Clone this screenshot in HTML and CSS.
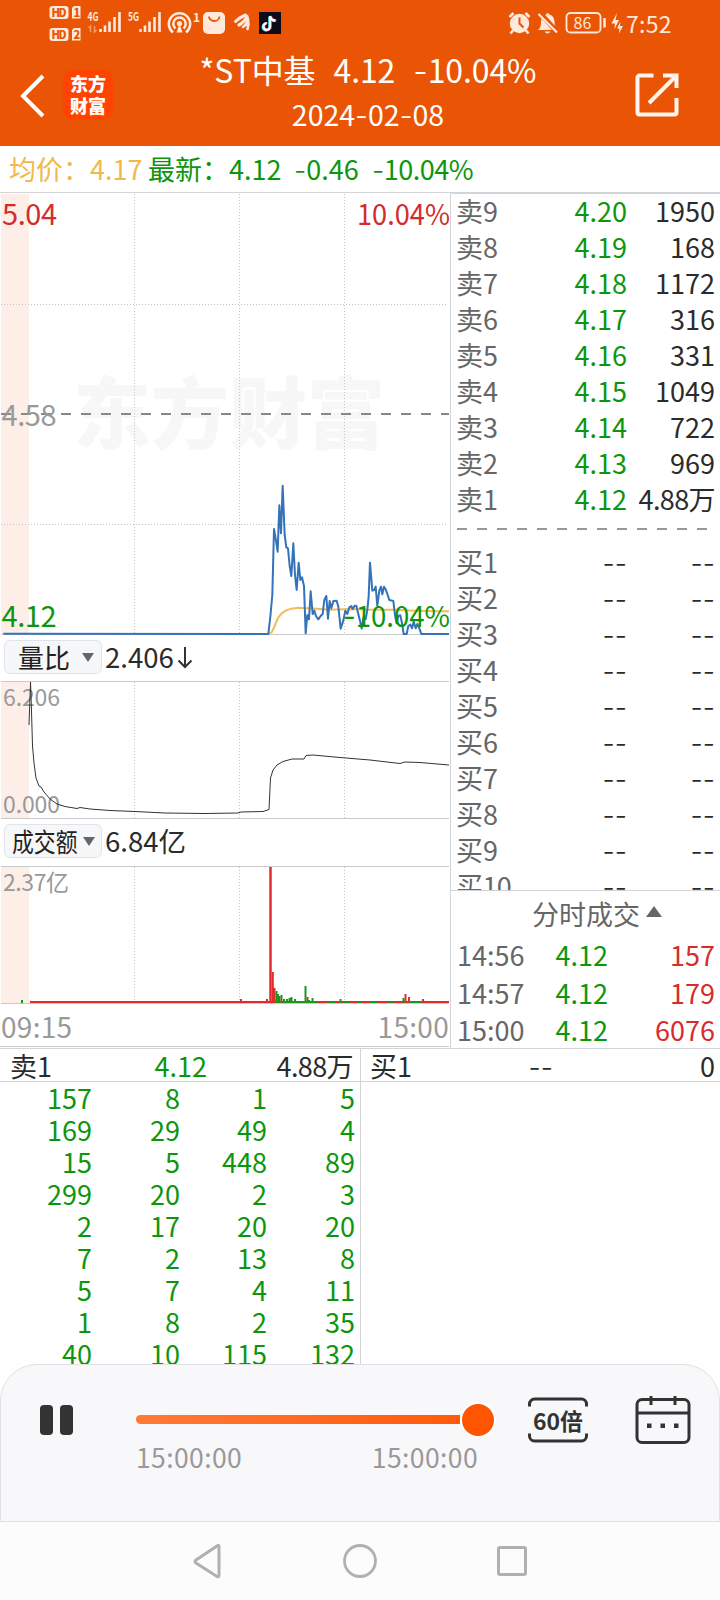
FILE: index.html
```html
<!DOCTYPE html>
<html lang="zh-CN">
<head>
  <meta charset="UTF-8" />
  <meta name="viewport" content="width=device-width, initial-scale=1.0"/>
  <title>*ST中基 2024-02-08</title>
  <link rel="stylesheet" href="styles.css">
</head>
<body>

  <!-- Header Section -->
  <header>
    <div class="status-bar">
      <svg width="36" height="46" viewBox="48 0 36 46">
        <g fill="#ffe9dc">
          <rect x="49.500" y="6" width="19" height="13" rx="3"/>
          <path d="M74 6h6.500v12.500h-8.500v-10.500z"/>
          <rect x="49.500" y="28" width="19" height="13" rx="3"/>
          <path d="M74 28h6.500v12.500h-8.500v-10.500z"/>
        </g>
        <g class="tiny-label">
          <text x="51.500" y="16.500" textLength="15">HD</text>
          <text x="73.500" y="16.500">1</text>
          <text x="51.500" y="38.500" textLength="15">HD</text>
          <text x="73.500" y="38.500">2</text>
        </g>
      </svg>
      <svg width="40" height="46" viewBox="84 0 40 46">
        <text class="net" x="87.500" y="21" textLength="11" lengthAdjust="spacingAndGlyphs">4G</text>
        <path d="M90.500 32v-6l-2 2M94.500 26v6l2-2" stroke="#f29a6b" stroke-width="1.500" fill="none"/>
        <path d="M100.500 32v-3M105 32v-6.500M109.500 32v-10.500M114.500 32v-15M119.500 32v-20" stroke="#ffe9dc" stroke-width="2.600"/>
      </svg>
      <svg width="40" height="46" viewBox="124 0 40 46">
        <text class="net" x="128" y="21" textLength="11" lengthAdjust="spacingAndGlyphs">5G</text>
        <path d="M140.500 32v-3M145 32v-6.500M149.500 32v-10.500M154.500 32v-15M159.500 32v-20" stroke="#ffe9dc" stroke-width="2.600"/>
      </svg>
      <svg width="36" height="46" viewBox="164 0 36 46">
        <g fill="none" stroke="#ffe9dc" stroke-width="2.500">
          <path d="M173 32.500a10.700 10.700 0 1 1 13 0"/>
          <path d="M175.500 28.500a6.200 6.200 0 1 1 8 0"/>
        </g>
        <circle cx="179.500" cy="23.500" r="2.600" fill="#ffe9dc"/>
        <path d="M179.500 24l3 8.500h-6z" fill="#ffe9dc"/>
        <text class="net" x="193" y="22">1</text>
      </svg>
      <svg width="28" height="46" viewBox="200 0 28 46">
        <rect x="203" y="12" width="22" height="22" rx="5" fill="#ffe9dc"/>
        <path d="M209 16.500a5.200 4.500 0 0 0 10.400 0" fill="none" stroke="#e95504" stroke-width="1.800"/>
      </svg>
      <svg width="28" height="46" viewBox="228 0 28 46">
        <g fill="none" stroke="#ffe9dc" stroke-linecap="round">
          <path d="M235.500 21.500q4-4 10-6.500" stroke-width="3"/>
          <path d="M239 25q6-3.500 8-8.500" stroke-width="3.200"/>
          <path d="M243 27q5-3 4.500-9.500M247.500 29q1.500-4 .5-10" stroke-width="2.600"/>
        </g>
      </svg>
      <svg width="28" height="46" viewBox="256 0 28 46">
        <rect x="259" y="12" width="22" height="22" fill="#0d0b18"/>
        <path d="M270 16v10.500a3.300 3.300 0 1 1-3.300-3.300M270 16q1 4.500 5.500 4.500" transform="translate(-.7 .7)" fill="none" stroke="#25e0e8" stroke-width="2.300"/>
        <path d="M270 16v10.500a3.300 3.300 0 1 1-3.300-3.300M270 16q1 4.500 5.500 4.500" transform="translate(.8 0)" fill="none" stroke="#fe2c55" stroke-width="2.300"/>
        <path d="M270 16v10.500a3.300 3.300 0 1 1-3.300-3.300M270 16q1 4.500 5.500 4.500" fill="none" stroke="#fff" stroke-width="2.300"/>
      </svg>
      <span class="spacer"></span>
      <svg width="29" height="46" viewBox="504 0 29 46">
        <circle cx="518.500" cy="23.500" r="9.700" fill="#ffe9dc"/>
        <path d="M508.500 17l4-4M528.500 17l-4-4M512 30.500l-2.500 3M525 30.500l2.500 3" stroke="#ffe9dc" stroke-width="2.500"/>
        <path d="M518.500 17.500v6l4 4" fill="none" stroke="#e95504" stroke-width="2"/>
      </svg>
      <svg width="29" height="46" viewBox="533 0 29 46">
        <path d="M537 30q3-2 3-8 0-6 5-7.500 1.500-3 3.500 0 5 1.500 5 7.500 0 6 3 8zM543.500 31.500h6q-3 4-6 0z" fill="#ffe9dc"/>
        <path d="M539 13l18 20" stroke="#e95504" stroke-width="5"/>
        <path d="M537.500 14l18.500 18.500" stroke="#ffe9dc" stroke-width="2.200"/>
      </svg>
      <svg width="46" height="46" viewBox="562 0 46 46">
        <rect x="565.500" y="13" width="34" height="19.500" rx="4" fill="none" stroke="#ffe9dc" stroke-width="1.800"/>
        <path d="M603.500 18v9.500" stroke="#ffe9dc" stroke-width="2.500"/>
        <text class="battery" x="581.500" y="29" text-anchor="middle">86</text>
      </svg>
      <svg width="17" height="46" viewBox="608 0 17 46">
        <path d="M616 13l-5.500 10.500h3.500l-.5 5.500 4.500-9h-3.500zM619.500 21.500l-.5 4.500h3l-4 7.500.5-5h-2.500z" fill="#ffe9dc"/>
      </svg>
      <span class="clock">7:52</span>
    </div>

    <div class="title-bar">
      <svg class="back" width="26" height="44" viewBox="0 0 26 44"><path d="M24 2L4 22l20 20" fill="none" stroke="#fff" stroke-width="4"/></svg>
      <div class="logo">东方<br>财富</div>
      <div class="title">
        <h1><span>*ST中基</span><span>4.12</span><span><i>-</i>10.04%</span></h1>
        <p>2024<i>-</i>02<i>-</i>08</p>
      </div>
      <svg class="share" width="44" height="46" viewBox="0 0 44 46">
        <path d="M18.500 3.500H4.500a2 2 0 0 0-2 2v35a2 2 0 0 0 2 2h35a2 2 0 0 0 2-2V26M28 3.500h13.500V16M41 4L14 31" fill="none" stroke="#fff5ee" stroke-width="4"/>
      </svg>
    </div>
  </header>

  <div class="quote-bar">
    <span class="avg">均价：</span>
    <span class="avg avg-num">4.17</span>
    <span class="down latest">最新：</span>
    <span class="down num-1">4.12</span>
    <span class="down num-2"><i>-</i>0.46</span>
    <span class="down num-3"><i>-</i>10.04%</span>
  </div>

  <main>
    <!-- Charts -->
    <section class="charts">
      <svg class="chart" width="450" height="442" viewBox="0 0 450 442">
        <rect x="1" y="1" width="28" height="440" fill="#fdeee8"/>
        <text class="watermark" x="73" y="250" textLength="312">东方财富</text>
        <path class="grid" d="M134.500 1v440M239.500 1v440M344.500 1v440M1 111.500h447M1 331.500h447"/>
        <path d="M1 221h448" stroke="#888" stroke-width="2" stroke-dasharray="10 10"/>
        <path d="M1 441.500h448" stroke="#c8cacc"/>
        <text class="axis big" x="1.500" y="233" textLength="55">4.58</text>
        <text class="axis big red" x="2" y="32" textLength="55">5.04</text>
        <text class="axis big red" x="450" y="32" text-anchor="end" textLength="93" lengthAdjust="spacingAndGlyphs">10.04%</text>
        <g transform="translate(250 267) scale(.3333)" fill="none" stroke-linejoin="round">
          <polyline stroke="#f2bd57" stroke-width="6" points="55,521 65,517 74,498 84,474 95,460 107,452 124,446 145,443 160,444 200,446 240,449 300,447 360,449 430,449 500,452 560,454 597,454"/>
          <polyline stroke="#3473b9" stroke-width="6" points="-740,521 55,522 61,470 67,405 72,207 77,235 83,275 88,136 93,220 98,77 104,225 109,262 114,265 119,318 124,348 130,250 135,345 140,390 146,308 151,360 156,352 162,378 167,520 172,465 177,478 182,394 188,462 193,452 198,468 205,478 212,468 218,462 223,420 229,408 234,476 239,423 244,445 250,423 260,422 265,440 272,506 280,482 286,452 292,462 298,442 304,438 308,447 314,437 319,437 324,458 330,482 335,506 341,470 347,478 352,450 356,410 360,308 367,392 373,390 377,380 382,438 388,392 393,380 397,403 402,380 408,390 418,420 430,423 435,465 440,490 445,468 451,466 456,490 461,522 470,522 475,498 481,494 486,505 491,485 497,505 502,492 508,505 514,522 597,522"/>
        </g>
        <text class="axis big green" x="1.500" y="434" textLength="55">4.12</text>
        <text class="axis big green" x="450" y="434" text-anchor="end" textLength="107" lengthAdjust="spacingAndGlyphs"><tspan class="minus">-</tspan>10.04%</text>
      </svg>

      <div class="indicator first">
        <button class="chip"><span>量比</span><b></b></button>
        <span>2.406</span>
        <svg class="arrow" width="16" height="24" viewBox="0 0 16 24"><path d="M8 1v20M1.500 14.500L8 21l6.500-6.500" fill="none" stroke="#333" stroke-width="2"/></svg>
      </div>

      <svg class="chart" width="450" height="138" viewBox="0 0 450 138">
        <rect x="1" y="1" width="28" height="136" fill="#fdeee8"/>
        <path class="grid" d="M134.500 1v136M239.500 1v136M344.500 1v136"/>
        <path d="M1 .5h448M1 137.500h448" stroke="#c8cacc"/>
        <text class="axis" x="3" y="25" textLength="57">6.206</text>
        <text class="axis" x="3" y="132" textLength="57">0.000</text>
        <polyline fill="none" stroke="#333" points="29,44 30.500,1 31.500,30 32.500,65 34,82 36,97 39,105 41,106 44,111 50,118 57,123 65,125.500 77,127.500 80,126.500 90,128 110,129.500 135,130.500 165,132 205,132.500 238,132 241,131 263,130.500 269,128.500 270.500,97 273,89 277,84 283,80.500 292,78 304,78 306,74.500 313,74 340,76.500 370,79 400,82.500 405,81 420,81.500 449,84"/>
      </svg>

      <div class="indicator">
        <button class="chip narrow"><span>成交额</span><b></b></button>
        <span>6.84亿</span>
      </div>

      <svg class="chart" width="450" height="138" viewBox="0 0 450 138">
        <rect x="1" y="1" width="28" height="136" fill="#fdeee8"/>
        <path class="grid" d="M134.500 1v136M239.500 1v136M344.500 1v136"/>
        <path d="M1 .5h448M1 137.500h448" stroke="#c8cacc"/>
        <text class="axis" x="3" y="25" textLength="66">2.37亿</text>
        <path d="M30 136h419" stroke="#e02c2c" stroke-width="2"/>
        <path d="M270.500 137V1" stroke="#e02c2c" stroke-width="2.500"/>
        <path d="M272.800 137v-31M274.500 137v-15M279.500 137v-7M241 137v-4M267 137v-4M307.500 137v-6M405.500 137v-9M409 137v-6M423 137v-4" stroke="#e02c2c" stroke-width="2"/>
        <path d="M22 137v-3M276.500 137v-12M278 137v-9M281.500 137v-8M284 137v-4M287 137v-4M289.500 137v-5M291.500 137v-6M295 137v-4M305.500 137v-17M309 137v-3M312.500 137v-5M340.500 137v-4M403.500 137v-5" stroke="#1c961c" stroke-width="2"/>
        <path d="M283 136h34M328 136h8M344 136h5M357 136h4M369 136h8M387 136h6M410 136h11" stroke="#1c961c" stroke-width="2"/>
      </svg>

      <div class="times"><span>09:15</span><span>15:00</span></div>
    </section>

    <!-- Order book -->
    <section class="book">
      <div class="levels">
        <ul>
          <li><span>卖9</span><span class="down">4.20</span><span>1950</span></li>
          <li><span>卖8</span><span class="down">4.19</span><span>168</span></li>
          <li><span>卖7</span><span class="down">4.18</span><span>1172</span></li>
          <li><span>卖6</span><span class="down">4.17</span><span>316</span></li>
          <li><span>卖5</span><span class="down">4.16</span><span>331</span></li>
          <li><span>卖4</span><span class="down">4.15</span><span>1049</span></li>
          <li><span>卖3</span><span class="down">4.14</span><span>722</span></li>
          <li><span>卖2</span><span class="down">4.13</span><span>969</span></li>
          <li><span>卖1</span><span class="down">4.12</span><span class="wan">4.88万</span></li>
        </ul>
        <div class="divider"></div>
        <ul>
          <li><span>买1</span><i>--</i><i>--</i></li>
          <li><span>买2</span><i>--</i><i>--</i></li>
          <li><span>买3</span><i>--</i><i>--</i></li>
          <li><span>买4</span><i>--</i><i>--</i></li>
          <li><span>买5</span><i>--</i><i>--</i></li>
          <li><span>买6</span><i>--</i><i>--</i></li>
          <li><span>买7</span><i>--</i><i>--</i></li>
          <li><span>买8</span><i>--</i><i>--</i></li>
          <li><span>买9</span><i>--</i><i>--</i></li>
          <li><span class="wan">买10</span><i>--</i><i>--</i></li>
        </ul>
      </div>
      <div class="deals">
        <h3>分时成交<b></b></h3>
        <ul>
          <li><span>14:56</span><span class="down">4.12</span><span class="up">157</span></li>
          <li><span>14:57</span><span class="down">4.12</span><span class="up">179</span></li>
          <li><span>15:00</span><span class="down">4.12</span><span class="up">6076</span></li>
        </ul>
      </div>
    </section>
  </main>

  <!-- Queue detail -->
  <section class="queue">
    <div class="side sell">
      <div class="queue-head"><span>卖1</span><span class="down">4.12</span><span class="wan">4.88万</span></div>
      <div class="orders">
        <span>157</span><span>8</span><span>1</span><span>5</span>
        <span>169</span><span>29</span><span>49</span><span>4</span>
        <span>15</span><span>5</span><span>448</span><span>89</span>
        <span>299</span><span>20</span><span>2</span><span>3</span>
        <span>2</span><span>17</span><span>20</span><span>20</span>
        <span>7</span><span>2</span><span>13</span><span>8</span>
        <span>5</span><span>7</span><span>4</span><span>11</span>
        <span>1</span><span>8</span><span>2</span><span>35</span>
        <span>40</span><span>10</span><span>115</span><span>132</span>
      </div>
    </div>
    <div class="side buy">
      <div class="queue-head"><span>买1</span><i>--</i><span>0</span></div>
    </div>
  </section>

  <!-- Playback controls -->
  <section class="player">
    <div class="pause"><b></b><b></b></div>
    <div class="progress">
      <div class="track"><div class="knob"></div></div>
      <div class="range"><span>15:00:00</span><span>15:00:00</span></div>
    </div>
    <div class="speed">
      <svg width="60" height="46" viewBox="0 0 60 46">
        <path d="M1.500 9.500V7a5 5 0 0 1 5-5h47a5 5 0 0 1 5 5v2.500M1.500 36.500V39a5 5 0 0 0 5 5h47a5 5 0 0 0 5-5v-2.500" fill="none" stroke="#333" stroke-width="3"/>
        <text x="30" y="33" text-anchor="middle" textLength="50" lengthAdjust="spacingAndGlyphs">60倍</text>
      </svg>
    </div>
    <svg class="calendar" width="56" height="50" viewBox="0 0 56 50">
      <g fill="none" stroke="#333" stroke-width="3">
        <rect x="2" y="4.500" width="52" height="43" rx="5"/>
        <path d="M3 18h50M16 1v9M40 1v9"/>
      </g>
      <path d="M12 28.500h4.500v4.500h-4.500zM25.500 28.500h4.500v4.500h-4.500zM39 28.500h4.500v4.500h-4.500z" fill="#333"/>
    </svg>
  </section>

  <nav>
    <svg width="32" height="38" viewBox="0 0 32 38"><path d="M27 4.500v29q0 2-2 1L4 21q-2-1.500 0-3L25 4q2-1.500 2 .5z" fill="none" stroke="#b0b0b0" stroke-width="3"/></svg>
    <svg width="36" height="36" viewBox="0 0 36 36"><circle cx="18" cy="18" r="15.500" fill="none" stroke="#b0b0b0" stroke-width="2.800"/></svg>
    <svg width="32" height="32" viewBox="0 0 32 32"><rect x="2.500" y="2.500" width="27" height="27" rx="1.500" fill="none" stroke="#b0b0b0" stroke-width="3"/></svg>
  </nav>

</body>
</html>
```
FILE: styles.css
```css
body {
  margin: 0;
  width: 720px;
  height: 1600px;
  overflow: hidden;
  display: flex;
  flex-direction: column;
  font-family: "Noto Sans CJK SC", sans-serif;
  font-size: 27px;
  color: #2b2b2b;
  background: #fff;
}

h1, h3, p, ul {
  margin: 0;
  padding: 0;
  font-weight: normal;
  list-style: none;
}

svg {
  display: block;
  flex: none;
}

/* wide minus signs */
i {
  font-family: Inter, sans-serif;
  font-style: normal;
  font-weight: 300;
}

.down {
  color: #0d960d;
}

.up {
  color: #d92b2b;
}

.wan {
  letter-spacing: -0.600px;
}

/* Header */
header {
  height: 146px;
  background: #e95504;
  color: #fff;
}

.status-bar {
  height: 46px;
  padding-left: 48px;
  display: flex;
}

.spacer {
  flex: 1;
}

.clock {
  width: 94px;
  font-size: 23px;
  line-height: 46px;
  letter-spacing: 0.300px;
  color: #ffe9dc;
}

.tiny-label {
  font-size: 11px;
  font-weight: 900;
  fill: #e95504;
}

.net {
  font-size: 12px;
  font-weight: 700;
  fill: #ffe9dc;
}

.battery {
  font-size: 16px;
  fill: #ffe9dc;
}

.title-bar {
  height: 100px;
  display: flex;
}

.back {
  margin: 28px 0 0 19px;
}

.logo {
  width: 50px;
  height: 50px;
  margin: 24px 0 0 18px;
  padding: 2px 0;
  box-sizing: border-box;
  border-radius: 10px;
  background: #ff4400;
  font-size: 18px;
  font-weight: 900;
  line-height: 22px;
  text-align: center;
}

.title {
  flex: 1;
  padding-right: 12px;
  text-align: center;
}

.title h1 {
  display: flex;
  justify-content: center;
  gap: 18px;
  font-size: 32px;
  line-height: 46px;
  letter-spacing: -0.100px;
  white-space: nowrap;
}

.title p {
  font-size: 28.500px;
  line-height: 38px;
}

.share {
  margin: 26px 41px 0 0;
}

/* Average / latest price */
.quote-bar {
  height: 47px;
  box-sizing: border-box;
  border-bottom: 1px solid #d2d4d8;
  display: flex;
  line-height: 45px;
  white-space: nowrap;
}

.quote-bar span {
  flex: none;
}

.avg {
  width: 81px;
  padding-left: 9px;
  color: #f0b94c;
}

.quote-bar .avg-num {
  width: 58px;
  padding-left: 0;
}

.latest {
  width: 81px;
}

.num-1 {
  width: 65px;
}

.num-2 {
  width: 78px;
}

.num-3 {
  letter-spacing: -0.500px;
}

/* Charts */
main {
  height: 855px;
  display: flex;
  border-bottom: 1px solid #d2d4d8;
}

.charts {
  width: 450px;
}

.grid {
  stroke: #c4c4c4;
  stroke-dasharray: 1 2;
  fill: none;
}

.axis {
  font-size: 23px;
  fill: #999;
}

.big {
  font-size: 29px;
}

.axis.red {
  fill: #d42c2c;
}

.axis.green {
  fill: #0d960d;
}

.minus {
  font-family: Inter, sans-serif;
}

.watermark {
  font-size: 78px;
  font-weight: 900;
  fill: #f7f7f7;
}

.indicator {
  height: 47px;
  display: flex;
  font-size: 27.500px;
  line-height: 42px;
}

.indicator.first {
  height: 46px;
}

.chip {
  width: 98px;
  height: 34px;
  margin: 5px 3px 0 4px;
  padding: 0 7px 0 13px;
  box-sizing: border-box;
  border: 1px solid #e1e3e8;
  border-radius: 6px;
  background: #f6f7f9;
  display: flex;
  justify-content: space-between;
  align-items: center;
  font-family: inherit;
  font-size: 26px;
  line-height: 30px;
  color: #222;
}

.chip span {
  white-space: nowrap;
}

.chip b {
  border: 6px solid transparent;
  border-top: 9px solid #666;
  border-bottom: 0;
}

.narrow {
  padding: 0 6px 0 7px;
}

.narrow span {
  width: 66px;
  transform: scaleX(0.84);
  transform-origin: left;
}

.arrow {
  margin: 11px 0 0 3px;
}

.times {
  height: 43px;
  width: 449px;
  display: flex;
  justify-content: space-between;
  border-bottom: 1px solid #c8cacc;
  font-size: 28px;
  line-height: 45px;
  letter-spacing: 0.300px;
  color: #999;
  padding-left: 1px;
  box-sizing: border-box;
}

/* Order book */
.book {
  width: 270px;
  box-sizing: border-box;
  border-left: 1px solid #d2d4d8;
}

.levels {
  height: 697px;
  box-sizing: border-box;
  overflow: hidden;
  padding-top: 2px;
  border-top: 1px solid #d2d4d8;
}

.book li {
  height: 36px;
  padding: 0 5px 0 6px;
  line-height: 30px;
  display: grid;
  grid-template-columns: 60px 110px 1fr;
}

.book li > :nth-child(n+2) {
  text-align: right;
}

.book li > :first-child {
  color: #666;
}

.levels li > :first-child {
  margin-left: -1px;
}

.book li i {
  padding-top: 2px;
}

.divider {
  height: 2px;
  margin: 8px 12px 17px 6px;
  background: repeating-linear-gradient(to right, #999 0 10px, transparent 10px 20px);
}

.deals {
  border-top: 1px solid #d2d4d8;
}

.deals h3 {
  height: 48px;
  padding-left: 81px;
  box-sizing: border-box;
  font-size: 27px;
  line-height: 46px;
  color: #666;
}

.deals h3 b {
  display: inline-block;
  margin-left: 6px;
  vertical-align: 8px;
  border: 8px solid transparent;
  border-bottom: 11px solid #666;
  border-top: 0;
}

.book .deals li {
  height: 37.500px;
  line-height: 31px;
  grid-template-columns: 70px 81px 1fr;
}

/* Queue detail */
.queue {
  height: 315px;
  flex: none;
  display: grid;
  grid-template-columns: 361px 359px;
}

.sell {
  border-right: 1px solid #d2d4d8;
}

.queue-head {
  height: 33px;
  box-sizing: border-box;
  padding: 0 7px 0 10px;
  border-bottom: 1px solid #d2d4d8;
  display: grid;
  grid-template-columns: 70px 127px 1fr;
  line-height: 33px;
}

.queue-head > :nth-child(n+2) {
  text-align: right;
}

.buy .queue-head {
  padding: 0 5px 0 9px;
  grid-template-columns: 70px 113px 1fr;
}

.queue-head i {
  padding-top: 2px;
}

.orders {
  display: grid;
  grid-template-columns: 92px 88px 87px 88px;
  grid-auto-rows: 32px;
  line-height: 32px;
  text-align: right;
  color: #0d960d;
}

/* Playback controls */
.player {
  position: relative;
  height: 158px;
  flex: none;
  box-sizing: border-box;
  border: 1px solid #e0e0e2;
  border-radius: 37px 37px 0 0;
  background: #f8f8fb;
  display: flex;
}

.pause {
  display: flex;
  gap: 7px;
  margin: 40px 63px 0 39px;
}

.pause b {
  width: 13px;
  height: 30px;
  border-radius: 4px;
  background: #333;
}

.progress {
  width: 342px;
  padding-top: 50px;
}

.track {
  position: relative;
  height: 9px;
  width: 324px;
  border-radius: 5px 0 0 5px;
  background: linear-gradient(to right, #ff7a38, #ff5a0c);
}

.knob {
  position: absolute;
  left: 324px;
  top: -13px;
  width: 32px;
  height: 32px;
  border: 2px solid #fff;
  border-radius: 50%;
  background: #ff5500;
}

.range {
  display: flex;
  justify-content: space-between;
  font-size: 26.500px;
  line-height: 40px;
  margin-top: 13px;
  letter-spacing: 0.400px;
  color: #999;
}

.speed {
  margin: 32px 0 0 50px;
}

.speed text {
  font-size: 23px;
  font-weight: 700;
  fill: #333;
}

.calendar {
  margin: 30px 0 0 47px;
}

/* System navigation */
nav {
  flex: 1;
  background: #fcfcfc;
  display: flex;
  justify-content: center;
  align-items: center;
  gap: 118px;
}
```
